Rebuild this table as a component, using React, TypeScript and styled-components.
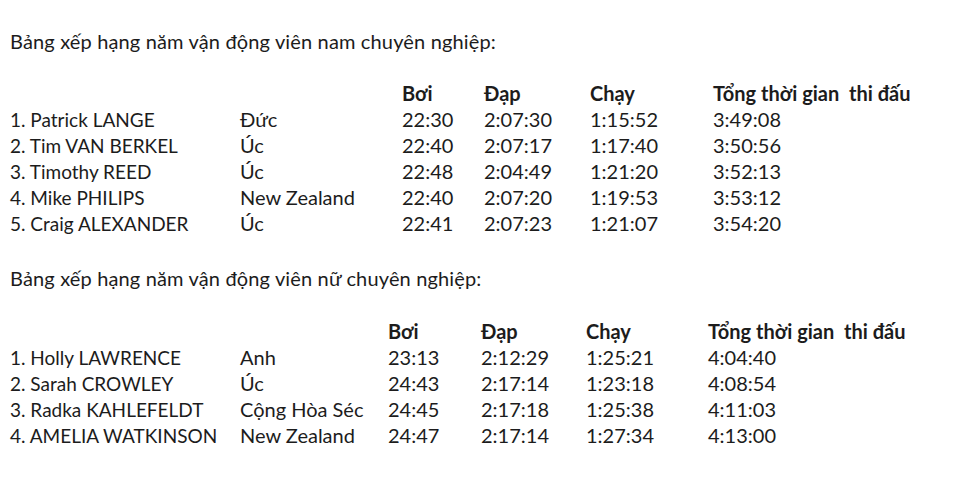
import React from "react";
import styled, { createGlobalStyle } from "styled-components";

const Global = createGlobalStyle`
  html, body { margin: 0; padding: 0; background: #ffffff; }
  body { font-family: Lato, "Open Sans", sans-serif; color: #1c1c1c; }
`;

const Page = styled.div`
  width: 960px;
  height: 488px;
  box-sizing: border-box;
  padding: 28px 0 0 10px;
  display: flex;
  flex-direction: column;
  font-size: 20px;
  line-height: 26px;
`;

const Title = styled.div<{ $gap: number }>`
  margin-bottom: ${(p) => p.$gap}px;
  white-space: nowrap;
  letter-spacing: 0.15px;
`;

const Table = styled.div<{ $cols: string; $after: number }>`
  display: grid;
  grid-template-columns: ${(p) => p.$cols};
  grid-auto-rows: 26px;
  align-items: baseline;
  margin-bottom: ${(p) => p.$after}px;
`;

const Cell = styled.div<{ $head?: boolean; $name?: boolean }>`
  white-space: pre;
  font-weight: ${(p) => (p.$head ? 700 : 400)};
  font-size: ${(p) => (p.$name ? "19px" : "inherit")};
`;

type Row = [string, string, string, string, string, string];

const men: Row[] = [
  ["1. Patrick LANGE", "Đức", "22:30", "2:07:30", "1:15:52", "3:49:08"],
  ["2. Tim VAN BERKEL", "Úc", "22:40", "2:07:17", "1:17:40", "3:50:56"],
  ["3. Timothy REED", "Úc", "22:48", "2:04:49", "1:21:20", "3:52:13"],
  ["4. Mike PHILIPS", "New Zealand", "22:40", "2:07:20", "1:19:53", "3:53:12"],
  ["5. Craig ALEXANDER", "Úc", "22:41", "2:07:23", "1:21:07", "3:54:20"],
];

const women: Row[] = [
  ["1. Holly LAWRENCE", "Anh", "23:13", "2:12:29", "1:25:21", "4:04:40"],
  ["2. Sarah CROWLEY", "Úc", "24:43", "2:17:14", "1:23:18", "4:08:54"],
  ["3. Radka KAHLEFELDT", "Cộng Hòa Séc", "24:45", "2:17:18", "1:25:38", "4:11:03"],
  ["4. AMELIA WATKINSON", "New Zealand", "24:47", "2:17:14", "1:27:34", "4:13:00"],
];

const head = ["", "", "Bơi", "Đạp", "Chạy", "Tổng thời gian  thi đấu"];

function Results({ rows, cols, after }: { rows: Row[]; cols: string; after: number }) {
  return (
    <Table $cols={cols} $after={after}>
      {head.map((h, i) => (
        <Cell key={"h" + i} $head>
          {h}
        </Cell>
      ))}
      {rows.map((r, ri) =>
        r.map((c, ci) => (
          <Cell key={ri + "-" + ci} $name={ci === 0}>
            {c}
          </Cell>
        ))
      )}
    </Table>
  );
}

export default function App() {
  return (
    <>
      <Global />
      <Page>
        <Title $gap={26}>Bảng xếp hạng năm vận động viên nam chuyên nghiệp:</Title>
        <Results rows={men} cols="230px 162px 82px 106px 123px 240px" after={29} />
        <Title $gap={27}>Bảng xếp hạng năm vận động viên nữ chuyên nghiệp:</Title>
        <Results rows={women} cols="230px 148px 93px 105px 122px 240px" after={0} />
      </Page>
    </>
  );
}
